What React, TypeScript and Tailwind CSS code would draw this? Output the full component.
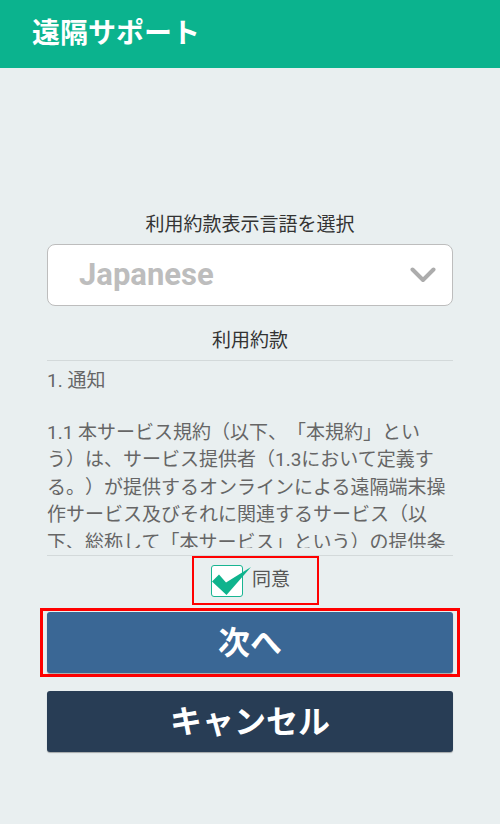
import { useState } from "react";

const terms =
  "1.1 本サービス規約（以下、「本規約」という）は、サービス提供者（1.3において定義する。）が提供するオンラインによる遠隔端末操作サービス及びそれに関連するサービス（以下、総称して「本サービス」という）の提供条件及び本サービスの利用に関する当社と利用者との間の権利義務関係を定めるものです。";

const App = () => {
  const [agreed, setAgreed] = useState(true);

  return (
    <div className="min-h-[824px] bg-[#e9eff0] font-['Roboto','Noto_Sans_CJK_JP',sans-serif] [text-spacing-trim:space-all]">
      <header className="h-[68px] bg-[#0bb38e] flex items-center pl-[32px]">
        <h1 className="text-white text-[28px] font-bold leading-none">遠隔サポート</h1>
      </header>

      <main className="px-[47px] pt-[144px]">
        <p className="text-center text-[19px] leading-[26px] text-[#333]">利用約款表示言語を選択</p>

        {/* Language select */}
        <div className="mt-[6px] h-[62px] rounded-[8px] border border-[#bdbdbd] bg-white flex items-center justify-between pl-[31px] pr-[16px]">
          <span className="text-[31px] font-bold text-[#bdbdbd] font-['Roboto',sans-serif]">Japanese</span>
          <svg width="26" height="16" viewBox="0 0 26 16" fill="none">
            <polyline
              points="2.5,2.5 13,13 23.5,2.5"
              stroke="#acacac"
              strokeWidth="4"
              strokeLinecap="round"
              strokeLinejoin="round"
            />
          </svg>
        </div>

        <p className="mt-[22px] text-center text-[19px] leading-[26px] text-[#333]">利用約款</p>

        {/* Terms text */}
        <div className="mt-[6px] border-t border-b border-[#d3d9da] pb-[7px]">
          <div className="h-[187px] overflow-hidden text-[19px] leading-[27.5px] text-[#666]">
            <p className="pt-[6px]">1. 通知</p>
            <p className="mt-[24px] break-all">{terms}</p>
          </div>
        </div>

        {/* Agree checkbox */}
        <div className="ml-[145px] w-[127px] h-[49px] border-2 border-[#ff0000] flex items-center pl-[17px]">
          <button
            className="relative w-[32px] h-[32px] rounded-[3px] border-[1.5px] border-[#19b592] bg-white"
            onClick={() => setAgreed(!agreed)}>
            {agreed && (
              <svg className="absolute -left-[1.5px] -top-[1.5px] overflow-visible" width="32" height="32" viewBox="0 0 32 32">
                <polygon points="1,17.5 8,10.5 15,18.5 40,3 15.5,31" fill="#0fb38d" />
              </svg>
            )}
          </button>
          <span className="ml-[9px] text-[19px] text-[#555]">同意</span>
        </div>

        {/* Next */}
        <div className="-mx-[7px] mt-[3px] border-[3px] border-[#ff0000] px-[4px] py-[1px]">
          <button className="w-full h-[61px] rounded-[3px] bg-[#3a6795] shadow-[0_1px_1px_rgba(0,0,0,0.3)] text-white text-[32px] font-bold">
            次へ
          </button>
        </div>

        {/* Cancel */}
        <button className="mt-[14px] w-full h-[61px] rounded-[3px] bg-[#283d55] shadow-[0_1px_1px_rgba(0,0,0,0.3)] text-white text-[32px] font-bold">
          キャンセル
        </button>
      </main>
    </div>
  );
};

export default App;
